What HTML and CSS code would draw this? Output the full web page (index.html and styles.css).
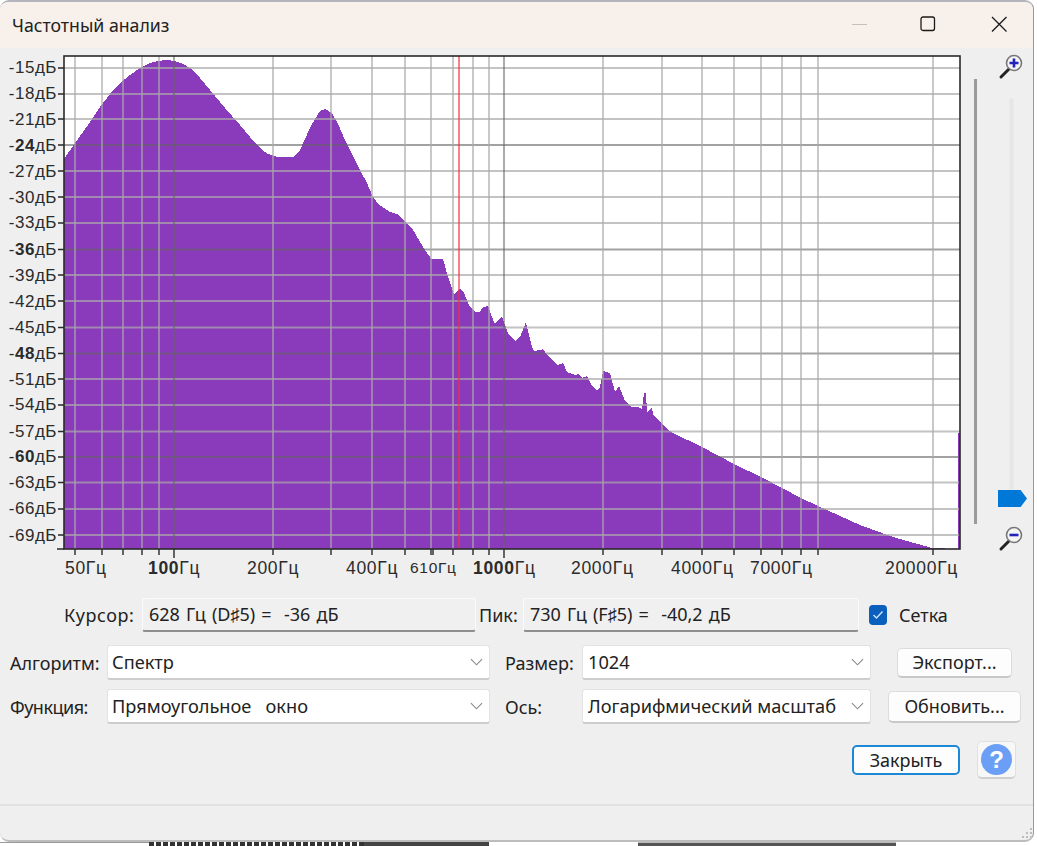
FILE: index.html
```html
<!DOCTYPE html>
<html lang="ru">
<head>
    <meta charset="UTF-8">
    <meta name="viewport" content="width=device-width, initial-scale=1.0">
    <title>Частотный анализ</title>
    <link rel="stylesheet" href="styles.css">
</head>
<body>
    <div class="window">
        <div class="titlebar">
            <span class="title">Частотный анализ</span>
            <div class="window-btns">
                <svg class="win-icon win-min" width="16" height="16" viewBox="0 0 16 16"><path class="min-stroke" d="M0 8.5H15"/></svg>
                <svg class="win-icon" width="16" height="16" viewBox="0 0 16 16"><rect class="win-stroke" x="1" y="1" width="13.5" height="13.5" rx="2"/></svg>
                <svg class="win-icon" width="16" height="16" viewBox="0 0 16 16"><path class="win-stroke" d="M1 1L15.5 15.5M15.5 1L1 15.5"/></svg>
            </div>
        </div>

        <div class="main">
            <svg class="plot" width="974" height="537" viewBox="0 48 974 537">
                <rect class="plot-bg" x="64" y="56" width="896" height="493"/>

                <!-- spectrum outline, traced point by point -->
                <polygon class="spectrum" points="64,549 64,159 75,143 88,125 100,107 110,94 120,83 130,75 140,68 150,63 158,61 166,60 175,61 183,64 190,68 200,78 210,90 225,108 240,125 255,143 262,150 268,154 278,157 293,157 297,154 300,150 305,139 310,128 315,119 320,111 325,109 332,113 338,124 345,140 352,154 360,170 367,183 372,195 378,204 384,208 390,212 397,214 403,220 412,228 420,242 425,250 430,257 431,259 443,259 448,277 454,294 460,289 463,291 470,307 475,312 480,312 483,307 488,306 492,317 495,324 502,316 505,325 508,333 515,341 520,337 526,322 527,327 532,347 534,351 540,350 543,349 548,356 557,365 563,363 567,372 575,375 579,374 582,378 587,376 592,386 597,390 600,387 603,371 610,373 615,392 619,386 625,401 632,407 638,407 642,409 644,393 646,393 647,412 652,407 653,415 662,424 667,429 673,433 702,447 734,464 761,477 782,488 801,498 818,506 860,525 893,537 932,548 958,549 958,433 960,433 960,549"/>

                <path class="grid" d="M64 68H960M64 94H960M64 119H960M64 171H960M64 197H960M64 223H960M64 275H960M64 301H960M64 327.5H960M64 379H960M64 405H960M64 431.5H960M64 482.5H960M64 509H960M64 535H960"/>
                <path class="grid-major" d="M64 145H960M64 249.5H960M64 353.5H960M64 457H960"/>
                <path class="grid" d="M75 56V549M102 56V549M123 56V549M142 56V549M159 56V549M273 56V549M331 56V549M372 56V549M405 56V549M431 56V549M453 56V549M473 56V549M489 56V549M603 56V549M662 56V549M702 56V549M734 56V549M761 56V549M782 56V549M801 56V549M818 56V549M933 56V549"/>
                <path class="grid-major" d="M174 56V549M504 56V549"/>
                <path class="cursor-line" d="M459 56V549"/>

                <rect class="frame" x="64" y="56" width="896" height="493"/>
                <path class="ticks" d="M58 68H64M58 94H64M58 119H64M58 145H64M58 171H64M58 197H64M58 223H64M58 249.5H64M58 275H64M58 301H64M58 327.5H64M58 353.5H64M58 379H64M58 405H64M58 431.5H64M58 457H64M58 482.5H64M58 509H64M58 535H64M57 549H64"/>
                <path class="ticks" d="M75 549V555M102 549V555M123 549V555M142 549V555M159 549V555M174 549V558M273 549V555M331 549V555M372 549V555M405 549V555M431 549V555M433 549V555M453 549V555M473 549V555M489 549V555M504 549V558M603 549V555M662 549V555M702 549V555M734 549V555M761 549V555M782 549V555M801 549V555M818 549V555M933 549V555"/>

                <g class="y-labels">
                    <text x="57" y="73">-15дБ</text>
                    <text x="57" y="99">-18дБ</text>
                    <text x="57" y="125">-21дБ</text>
                    <text x="57" y="151">-<tspan class="bold">24</tspan>дБ</text>
                    <text x="57" y="177">-27дБ</text>
                    <text x="57" y="203">-30дБ</text>
                    <text x="57" y="228">-33дБ</text>
                    <text x="57" y="255">-<tspan class="bold">36</tspan>дБ</text>
                    <text x="57" y="281">-39дБ</text>
                    <text x="57" y="307">-42дБ</text>
                    <text x="57" y="333">-45дБ</text>
                    <text x="57" y="359">-<tspan class="bold">48</tspan>дБ</text>
                    <text x="57" y="385">-51дБ</text>
                    <text x="57" y="410">-54дБ</text>
                    <text x="57" y="437">-57дБ</text>
                    <text x="57" y="462">-<tspan class="bold">60</tspan>дБ</text>
                    <text x="57" y="488">-63дБ</text>
                    <text x="57" y="514">-66дБ</text>
                    <text x="57" y="541">-69дБ</text>
                </g>
                <g class="x-labels">
                    <text x="65" y="574">50Гц</text>
                    <text x="148" y="574"><tspan class="bold">100</tspan>Гц</text>
                    <text x="247" y="574">200Гц</text>
                    <text x="346" y="574">400Гц</text>
                    <text class="small" x="410" y="573">610Гц</text>
                    <text x="473" y="574"><tspan class="bold">1000</tspan>Гц</text>
                    <text x="571" y="574">2000Гц</text>
                    <text x="671" y="574">4000Гц</text>
                    <text x="750" y="574">7000Гц</text>
                    <text x="885" y="574">20000Гц</text>
                </g>
            </svg>

            <div class="vbar"></div>

            <div class="zoom-col">
                <svg class="zoom-icon" width="32" height="32" viewBox="0 0 32 32">
                    <path class="zoom-handle" d="M3 28L11 20"/>
                    <circle class="zoom-lens" cx="16" cy="14" r="7.5"/>
                    <path class="zoom-sign" d="M11.5 14H20.5M16 9.5V18.500"/>
                </svg>
                <div class="track"></div>
                <div class="thumb"></div>
                <svg class="zoom-icon" width="32" height="32" viewBox="0 0 32 32">
                    <path class="zoom-handle" d="M3 28L11 20"/>
                    <circle class="zoom-lens" cx="16" cy="14" r="7.500"/>
                    <path class="zoom-sign" d="M11.500 14H20.500"/>
                </svg>
            </div>
        </div>

        <div class="row row-info">
            <span class="label label-cursor">Курсор:</span>
            <div class="readout readout-cursor">628 Гц (D♯5) =  -36 дБ</div>
            <span class="label label-peak">Пик:</span>
            <div class="readout readout-peak">730 Гц (F♯5) =  -40,2 дБ</div>
            <div class="checkbox">
                <svg width="12" height="10" viewBox="0 0 12 10"><path d="M1.500 5L4.500 8L10.500 1.500"/></svg>
            </div>
            <span class="check-label">Сетка</span>
        </div>

        <div class="row row-select">
            <span class="label label-left">Алгоритм:</span>
            <div class="select select-left">
                <span>Спектр</span>
                <svg class="chevron" width="13" height="8" viewBox="0 0 14 8"><path d="M1 1L7 7L13 1"/></svg>
            </div>
            <span class="label label-right">Размер:</span>
            <div class="select select-right">
                <span>1024</span>
                <svg class="chevron" width="13" height="8" viewBox="0 0 14 8"><path d="M1 1L7 7L13 1"/></svg>
            </div>
            <button class="btn btn-export">Экспорт...</button>
        </div>

        <div class="row row-select row-second">
            <span class="label label-left label-tight">Функция:</span>
            <div class="select select-left">
                <span>Прямоугольное   окно</span>
                <svg class="chevron" width="13" height="8" viewBox="0 0 14 8"><path d="M1 1L7 7L13 1"/></svg>
            </div>
            <span class="label label-right">Ось:</span>
            <div class="select select-right">
                <span>Логарифмический масштаб</span>
                <svg class="chevron" width="13" height="8" viewBox="0 0 14 8"><path d="M1 1L7 7L13 1"/></svg>
            </div>
            <button class="btn btn-update">Обновить...</button>
        </div>

        <div class="row row-actions">
            <button class="btn btn-close">Закрыть</button>
            <button class="btn-help"><span class="help-circle">?</span></button>
        </div>

        <div class="statusbar">
            <svg class="grip" width="14" height="14" viewBox="0 0 14 14"><path d="M11 2h2v2h-2zM7 6h2v2H7zM11 6h2v2h-2zM3 10h2v2H3zM7 10h2v2H7zM11 10h2v2h-2z"/></svg>
        </div>
    </div>

    <div class="behind">
        <div class="behind-a"></div>
        <div class="behind-b"></div>
        <div class="behind-c"></div>
        <div class="behind-d"></div>
        <div class="behind-e"></div>
    </div>
</body>
</html>
```

FILE: styles.css
```css
html, body {
    margin: 0;
    padding: 0;
}

body {
    width: 1037px;
    height: 846px;
    overflow: hidden;
    background: #fff;
    font-family: 'Noto Sans', 'Open Sans', sans-serif;
    font-size: 18px;
    color: #222;
}

.window {
    width: 1034px;
    height: 842px;
    box-sizing: border-box;
    background: #efefef;
    border-top: 2px solid #b4b4bc;
    border-right: 1px solid #999;
    border-bottom: 2px solid #bdbdbd;
    border-radius: 9px;
    display: flex;
    flex-direction: column;
    overflow: hidden;
}

.titlebar {
    height: 46px;
    flex: none;
    background: #f8f0ea;
    display: flex;
    align-items: center;
    justify-content: space-between;
    padding: 0 26px 0 12px;
}

.title {
    font-size: 17.7px;
}

.window-btns {
    display: flex;
    gap: 55px;
    margin-bottom: 2px;
}

.win-min {
    margin-right: -3px;
}

.win-stroke {
    fill: none;
    stroke: #1a1a1a;
    stroke-width: 1.3;
}

.min-stroke {
    fill: none;
    stroke: #c4c0bc;
    stroke-width: 1;
}

.main {
    display: flex;
    height: 537px;
    flex: none;
}

.plot {
    display: block;
    flex: none;
}

.plot-bg {
    fill: #fff;
}

.spectrum {
    fill: #8a3bbb;
    shape-rendering: crispEdges;
}

.grid {
    fill: none;
    stroke: rgba(170, 170, 170, 0.7);
    stroke-width: 1.8;
}

.grid-major {
    fill: none;
    stroke: rgba(100, 100, 100, 0.6);
    stroke-width: 1.8;
}

.cursor-line {
    stroke: #f5303c;
    stroke-width: 1.4;
    opacity: 0.85;
}

.frame {
    fill: none;
    stroke: #2a2a2a;
    stroke-width: 1.6;
}

.ticks {
    fill: none;
    stroke: #2a2a2a;
    stroke-width: 1.4;
}

.y-labels text,
.x-labels text {
    font-family: 'Liberation Sans', Arial, sans-serif;
    fill: #2b2b2b;
}

.y-labels text {
    font-size: 17px;
    letter-spacing: 0.5px;
    text-anchor: end;
}

.x-labels text {
    font-size: 17.5px;
    letter-spacing: 0.7px;
}

.x-labels text.small {
    font-size: 15.5px;
}

.bold {
    font-weight: 700;
}

.vbar {
    width: 3px;
    height: 445px;
    margin-top: 31px;
    background: #9a9a9a;
    flex: none;
}

.zoom-col {
    position: relative;
    width: 41px;
    padding-left: 15px;
    display: flex;
    flex-direction: column;
    align-items: center;
}

.zoom-icon {
    display: block;
    flex: none;
    margin-top: 1px;
    margin-left: 3px;
}

.zoom-handle {
    fill: none;
    stroke: #222;
    stroke-width: 3;
    stroke-linecap: round;
}

.zoom-lens {
    fill: #f4f4f4;
    stroke: #777;
    stroke-width: 1.6;
}

.zoom-sign {
    fill: none;
    stroke: #2222bb;
    stroke-width: 2.6;
}

.track {
    width: 5px;
    height: 392px;
    margin-top: 17px;
    margin-right: 2px;
    background: #e4e7e4;
    border: 1px solid #e9ebe9;
    box-sizing: border-box;
}

.thumb {
    width: 29px;
    height: 17px;
    flex: none;
    background: #0078d7;
    clip-path: polygon(0 0, 78% 0, 100% 50%, 78% 100%, 0 100%);
    margin-bottom: 13px;
}

.row {
    display: flex;
    align-items: center;
    flex: none;
}

.row-info {
    height: 34px;
    margin-top: 13px;
    padding-left: 64px;
}

.label-cursor {
    width: 78px;
    letter-spacing: 0.6px;
}

.label-peak {
    width: 44px;
    margin-left: 3px;
}

.label-tight {
    letter-spacing: -0.5px;
}

.readout {
    height: 34px;
    line-height: 31px;
    box-sizing: border-box;
    padding-left: 6px;
    word-spacing: 1.5px;
    white-space: pre;
    background: #f0f0f0;
    border: 1px solid #fafafa;
    border-bottom: 2px solid #8e8e8e;
    border-radius: 3px;
}

.readout-cursor {
    width: 334px;
}

.readout-peak {
    width: 336px;
}

.checkbox {
    width: 18px;
    height: 20px;
    margin-left: 10px;
    background: #0b5fbd;
    border-radius: 4px;
    display: flex;
    align-items: center;
    justify-content: center;
}

.checkbox path {
    fill: none;
    stroke: #cfe4fa;
    stroke-width: 1.4;
}

.check-label {
    margin-left: 12px;
}

.row-select {
    height: 35px;
    margin-top: 13px;
    padding-left: 10px;
}

.row-second {
    margin-top: 9px;
}

.label-left {
    width: 97px;
}

.label-right {
    width: 77px;
    margin-left: 15px;
}

.select {
    height: 100%;
    box-sizing: border-box;
    display: flex;
    align-items: center;
    justify-content: space-between;
    padding: 0 6px 0 5px;
    font-size: 18.2px;
    white-space: pre;
    background: #fff;
    border: 1px solid #e2e2e2;
    border-bottom: 2px solid #cdcdcd;
    border-radius: 3px;
}

.select-left {
    width: 383px;
    padding-left: 4px;
}

.select-right {
    width: 289px;
}

.chevron path {
    fill: none;
    stroke: #888;
    stroke-width: 1.2;
}

.btn {
    box-sizing: border-box;
    font: inherit;
    color: inherit;
    background: #fdfdfd;
    border: 1px solid #dcdcdc;
    border-bottom: 2px solid #c8c8c8;
    border-radius: 5px;
    padding: 0;
}

.btn-export {
    width: 115px;
    height: 30px;
    margin-left: 26px;
}

.btn-update {
    width: 133px;
    height: 32px;
    margin-left: 17px;
}

.row-actions {
    height: 38px;
    margin-top: 17px;
    justify-content: flex-end;
    padding-right: 17px;
    gap: 17px;
}

.btn-close {
    width: 108px;
    height: 30px;
    border: 2px solid #1e88d8;
    border-radius: 5px;
}

.btn-help {
    width: 39px;
    height: 38px;
    box-sizing: border-box;
    padding: 0;
    background: #f7f7f7;
    border: 1px solid #e0e0e0;
    border-bottom: 2px solid #cfcfcf;
    border-radius: 5px;
    display: flex;
    align-items: center;
    justify-content: center;
}

.help-circle {
    width: 31px;
    height: 31px;
    border-radius: 50%;
    background: #6a9ff5;
    color: #fff;
    font-family: 'Liberation Sans', sans-serif;
    font-size: 24px;
    font-weight: 700;
    line-height: 31px;
    text-align: center;
}

.statusbar {
    position: relative;
    flex: 1;
    margin-top: 25px;
    border-top: 2px solid #e2e2e2;
}

.grip {
    position: absolute;
    right: 0;
    bottom: 0;
}

.grip path {
    fill: #bdbdbd;
}

.behind {
    display: flex;
    height: 4px;
}

.behind-a {
    width: 149px;
    border-top: 1px solid #999;
}

.behind-b {
    width: 215px;
    background: repeating-linear-gradient(90deg, #333 0 5px, #fff 5px 7px);
}

.behind-c {
    width: 125px;
    background: #444;
}

.behind-d {
    width: 149px;
}

.behind-e {
    width: 258px;
    background: #555;
    border-top: 1px solid #bbb;
}
```
